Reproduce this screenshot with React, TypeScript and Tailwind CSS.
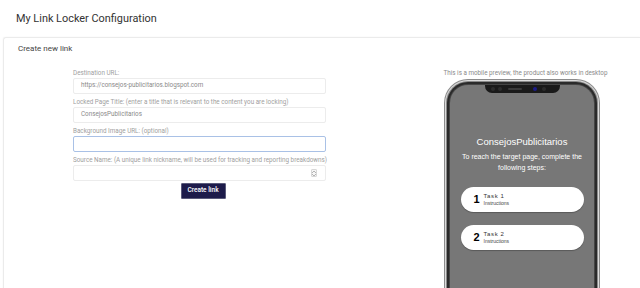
import React from "react";

const Label = ({ children }: { children: React.ReactNode }) => (
  <div className="text-[6.3px] leading-[8px] text-[#a0a0a0] mb-[1px] whitespace-nowrap">{children}</div>
);

const Input = ({ value, focused, spinner }: { value?: string; focused?: boolean; spinner?: boolean }) => (
  <div
    className={
      "h-[16px] rounded-[2px] border flex items-center pl-[7px] pr-[8px] text-[6.3px] text-[#8a8a8a] " +
      (focused ? "border-[#a9c1e6]" : "border-[#ececec]")
    }
  >
    <span className="flex-1 whitespace-nowrap">{value}</span>
    {spinner && (
      <div className="w-[6px] h-[8px] border border-[#d8d8d8] rounded-[1px] flex flex-col items-center justify-center gap-[1px] bg-[#f6f6f6]">
        <svg width="4" height="2" viewBox="0 0 4 2"><path d="M0 2 L2 0 L4 2" fill="none" stroke="#888" strokeWidth="0.6" /></svg>
        <svg width="4" height="2" viewBox="0 0 4 2"><path d="M0 0 L2 2 L4 0" fill="none" stroke="#888" strokeWidth="0.6" /></svg>
      </div>
    )}
  </div>
);

const Task = ({ n }: { n: number }) => (
  <div className="w-[123px] h-[25px] rounded-full bg-white flex items-center pl-[13px] shadow-[0_1px_1px_rgba(0,0,0,0.25)]">
    <span className="text-[11px] font-bold text-black leading-none w-[10px]">{n}</span>
    <div className="flex flex-col leading-none">
      <span className="text-[6px] font-normal tracking-[0.6px] text-[#333]">Task {n}</span>
      <span className="text-[5px] font-normal text-[#444] mt-[2px]">Instructions</span>
    </div>
  </div>
);

export default function App() {
  return (
    <div
      className="w-[640px] h-[288px] overflow-hidden bg-white"
      style={{ fontFamily: "Roboto, 'Liberation Sans', sans-serif" }}
    >
      <div className="h-[38px] pl-[16px] flex items-center text-[10.9px] text-[#333]">
        My Link Locker Configuration
      </div>
      <div className="-mt-[1px] ml-[3px] border-t border-l border-[#ebebeb] rounded-tl-[3px] h-[260px] shadow-[0_0_2px_rgba(0,0,0,0.05)]">
        <div className="h-[22px] pl-[14px] flex items-center text-[8px] text-[#444]">Create new link</div>
        <div className="flex pt-[9px]">
          <div className="ml-[69px] w-[253px] flex flex-col">
            <Label>Destination URL:</Label>
            <Input value="https://consejos-publicitarios.blogspot.com" />
            <div className="h-[4px]" />
            <Label>Locked Page Title: (enter a title that is relevant to the content you are locking)</Label>
            <Input value="ConsejosPublicitarios" />
            <div className="h-[4px]" />
            <Label>Background Image URL: (optional)</Label>
            <Input focused />
            <div className="h-[4px]" />
            <Label>Source Name: (A unique link nickname, will be used for tracking and reporting breakdowns)</Label>
            <Input spinner />
            <div className="flex justify-center mt-[2px] pl-[7px]">
              <button className="h-[16px] w-[45px] bg-[#1d1b4a] border border-[#5a5a7a] rounded-[1px] text-white text-[6.5px] font-medium flex items-center justify-center">
                Create link
              </button>
            </div>
          </div>
          <div className="ml-[96px] w-[200px] flex flex-col items-center">
            <div className="text-[6.3px] leading-[8px] text-[#8a8a8a] whitespace-nowrap pl-[7px]">
              This is a mobile preview, the product also works in desktop
            </div>
            <div className="mt-[2px] w-[156px] h-[240px] rounded-[24px] bg-[#8c8c8c] p-[1px]">
              <div className="w-full h-full rounded-[23px] bg-[#dcdcdc] p-[1px]">
                <div className="w-full h-full rounded-[22px] bg-[#8a8a8a] p-[1px]">
                  <div className="w-full h-full rounded-[21px] bg-[#2a2a2a] p-[2px]">
                    <div className="w-full h-full rounded-[19px] bg-[#454545] p-[1px]">
                      <div
                        className="relative w-full h-full rounded-[18px] bg-[#777777] flex flex-col items-center"
                        style={{ fontFamily: "'Liberation Sans', Arial, sans-serif" }}
                      >
                        <div className="absolute top-0 left-[35px] w-[75px] h-[8px] bg-[#1a1a1a] rounded-b-[7px] flex items-center px-[6px] gap-[3px]">
                          <div className="w-[4px] h-[4px] rounded-full bg-[#2c2c2c]" />
                          <div className="w-[4px] h-[4px] rounded-full bg-[#2c2c2c]" />
                          <div className="ml-[3px] w-[14px] h-[2px] rounded-full bg-[#3a3a3a]" />
                          <div className="ml-[8px] w-[4px] h-[4px] rounded-full bg-[#1c1c8a]" />
                          <div className="ml-[2px] w-[4px] h-[4px] rounded-full bg-[#2c2c2c]" />
                        </div>
                        <div className="mt-[51px] text-[9.5px] text-white leading-[12px]">ConsejosPublicitarios</div>
                        <div className="mt-[3px] text-[7px] leading-[11px] text-white text-center w-[130px]">
                          To reach the target page, complete the following steps:
                        </div>
                        <div className="mt-[14px] flex flex-col gap-[13px]">
                          <Task n={1} />
                          <Task n={2} />
                        </div>
                      </div>
                    </div>
                  </div>
                </div>
              </div>
            </div>
          </div>
        </div>
      </div>
    </div>
  );
}
